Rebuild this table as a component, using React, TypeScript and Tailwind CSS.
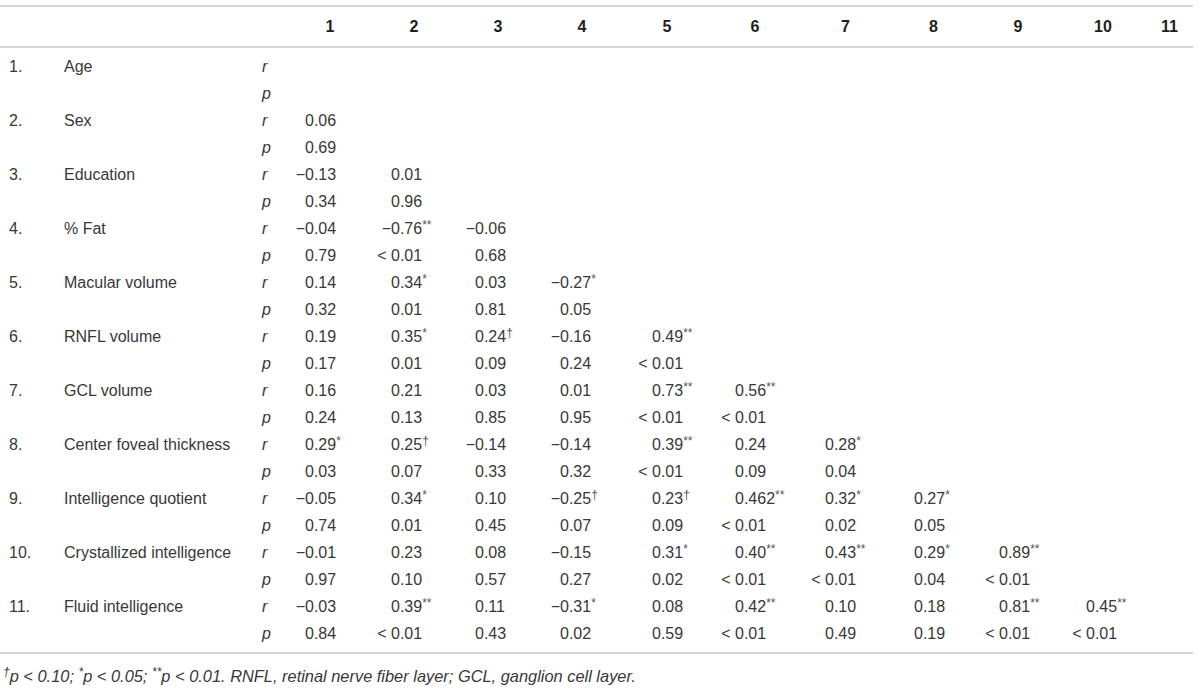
import React from "react";

type Row = { n: string; label: string; r: string[]; p: string[] };

const rows: Row[] = [
  { n: "1.", label: "Age", r: [], p: [] },
  { n: "2.", label: "Sex", r: ["0.06"], p: ["0.69"] },
  { n: "3.", label: "Education", r: ["−0.13", "0.01"], p: ["0.34", "0.96"] },
  { n: "4.", label: "% Fat", r: ["−0.04", "−0.76**", "−0.06"], p: ["0.79", "< 0.01", "0.68"] },
  { n: "5.", label: "Macular volume", r: ["0.14", "0.34*", "0.03", "−0.27*"], p: ["0.32", "0.01", "0.81", "0.05"] },
  { n: "6.", label: "RNFL volume", r: ["0.19", "0.35*", "0.24†", "−0.16", "0.49**"], p: ["0.17", "0.01", "0.09", "0.24", "< 0.01"] },
  { n: "7.", label: "GCL volume", r: ["0.16", "0.21", "0.03", "0.01", "0.73**", "0.56**"], p: ["0.24", "0.13", "0.85", "0.95", "< 0.01", "< 0.01"] },
  { n: "8.", label: "Center foveal thickness", r: ["0.29*", "0.25†", "−0.14", "−0.14", "0.39**", "0.24", "0.28*"], p: ["0.03", "0.07", "0.33", "0.32", "< 0.01", "0.09", "0.04"] },
  { n: "9.", label: "Intelligence quotient", r: ["−0.05", "0.34*", "0.10", "−0.25†", "0.23†", "0.462**", "0.32*", "0.27*"], p: ["0.74", "0.01", "0.45", "0.07", "0.09", "< 0.01", "0.02", "0.05"] },
  { n: "10.", label: "Crystallized intelligence", r: ["−0.01", "0.23", "0.08", "−0.15", "0.31*", "0.40**", "0.43**", "0.29*", "0.89**"], p: ["0.97", "0.10", "0.57", "0.27", "0.02", "< 0.01", "< 0.01", "0.04", "< 0.01"] },
  { n: "11.", label: "Fluid intelligence", r: ["−0.03", "0.39**", "0.11", "−0.31*", "0.08", "0.42**", "0.10", "0.18", "0.81**", "0.45**"], p: ["0.84", "< 0.01", "0.43", "0.02", "0.59", "< 0.01", "0.49", "0.19", "< 0.01", "< 0.01"] },
];

const GRID =
  "grid grid-cols-[64px_198px_26px_84px_84px_84px_84px_86px_90px_91px_85px_84px_86px_47px]";

const cellPad = [
  "pl-[3px]",
  "pl-[5px]",
  "pl-[5px]",
  "pl-[6px]",
  "pl-[14px]",
  "pl-[11px]",
  "pl-[11px]",
  "pl-[9px]",
  "pl-[9px]",
  "pl-[12px]",
  "pl-[0px]",
];

function Value({ v }: { v: string }) {
  let prefix = "";
  let rest = v;
  if (rest.startsWith("−")) {
    prefix = "−";
    rest = rest.slice(1);
  } else if (rest.startsWith("< ")) {
    prefix = "<\u00a0";
    rest = rest.slice(2);
  }
  const m = rest.match(/^([0-9.]+)(.*)$/);
  const num = m ? m[1] : rest;
  const suf = m ? m[2] : "";
  return (
    <span className="flex items-center">
      <span className="w-[14px] text-right whitespace-pre">{prefix}</span>
      <span>{num}</span>
      {suf && (
        <span className="text-[12px] leading-none relative top-[-4px] text-[#555]">{suf}</span>
      )}
    </span>
  );
}

function DataRow({ n, label, kind, vals }: { n: string; label: string; kind: string; vals: string[] }) {
  const cells = [];
  for (let i = 0; i < 11; i++) {
    cells.push(
      <div key={i} className={`${cellPad[i]} flex items-center`}>
        {vals[i] !== undefined ? <Value v={vals[i]} /> : null}
      </div>
    );
  }
  return (
    <div className={`${GRID} h-[27px] items-center`}>
      <div className="pl-[9px]">{n}</div>
      <div>{label}</div>
      <div className="italic">{kind}</div>
      {cells}
    </div>
  );
}

export default function App() {
  const headers = ["1", "2", "3", "4", "5", "6", "7", "8", "9", "10", "11"];
  return (
    <div
      className="w-[1200px] h-[688px] bg-white text-[#383838] text-[16px]"
      style={{ fontFamily: "'Liberation Sans', Arial, sans-serif" }}
    >
      <div className="w-[1193px] pt-[5px]">
        <div className="border-t-2 border-b-2 border-[#d5d5d5]">
          <div className={`${GRID} h-[39px] items-center font-bold text-[#1e1e1e]`}>
            <div />
            <div />
            <div />
            {headers.map((h) => (
              <div key={h} className="text-center">
                {h}
              </div>
            ))}
          </div>
        </div>
        <div className="pt-[5px] pb-[5px] border-b-2 border-[#d5d5d5]">
          {rows.map((row) => (
            <React.Fragment key={row.n}>
              <DataRow n={row.n} label={row.label} kind="r" vals={row.r} />
              <DataRow n="" label="" kind="p" vals={row.p} />
            </React.Fragment>
          ))}
        </div>
        <div className="pt-[12px] pl-[3px] italic text-[16.4px] leading-[20px] text-[#383838]">
          <sup className="text-[12px]">†</sup>p &lt; 0.10; <sup className="text-[12px]">*</sup>p &lt; 0.05;{" "}
          <sup className="text-[12px]">**</sup>p &lt; 0.01. RNFL, retinal nerve fiber layer; GCL, ganglion cell layer.
        </div>
      </div>
    </div>
  );
}
